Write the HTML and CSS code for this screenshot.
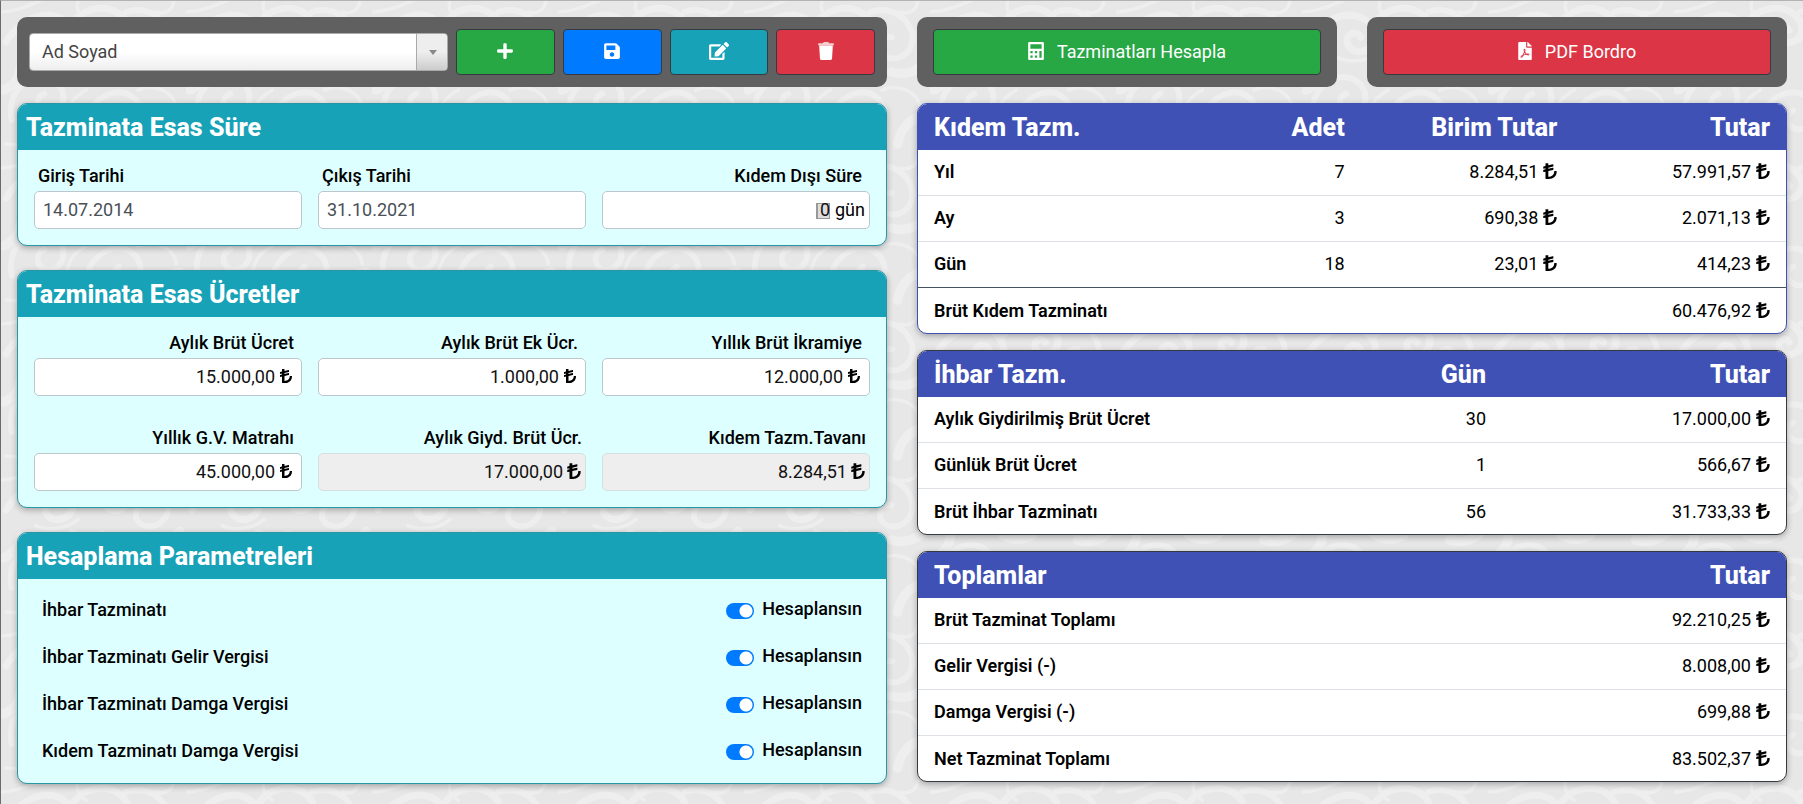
FILE: index.html
```html
<!DOCTYPE html>
<html lang="tr">
<head>
<meta charset="utf-8">
<meta name="viewport" content="width=device-width, initial-scale=1">
<title>Tazminat Hesaplama</title>
<link rel="stylesheet" href="styles.css">
</head>
<body>
<svg class="sprite" aria-hidden="true">
  <symbol id="lira" viewBox="0 0 384 512"><path d="M371.994 256h-48.019C317.64 256 312 260.912 312 267.246 312 368 230.179 416 144 416V256.781l134.603-29.912A12 12 0 0 0 288 215.155v-40.976c0-7.677-7.109-13.38-14.603-11.714L144 191.219V160.78l134.603-29.912A12 12 0 0 0 288 119.154V78.179c0-7.677-7.109-13.38-14.603-11.714L144 95.219V44c0-6.627-5.373-12-12-12H76c-6.627 0-12 5.373-12 12v68.997L9.397 125.131A12 12 0 0 0 0 136.845v40.976c0 7.677 7.109 13.38 14.603 11.714L64 178.558v30.439L9.397 221.131A12 12 0 0 0 0 232.845v40.976c0 7.677 7.109 13.38 14.603 11.714L64 274.558V468c0 6.627 5.373 12 12 12h79.583c134.091 0 223.255-77.834 228.408-211.592.261-6.782-5.211-12.408-11.997-12.408z"/></symbol>
</svg>
<svg class="backdrop" aria-hidden="true">
  <defs>
    <pattern id="damask" width="310" height="260" patternUnits="userSpaceOnUse" patternTransform="scale(.6)">
      <g fill="none" stroke="#f8f8f8" stroke-linecap="round">
        <path stroke-width="12" d="M10 70c30-50 90-60 110-20 12 30-30 50-44 24-6-16 14-26 22-12M120 40c30-40 80-30 92 0 8 26-22 42-36 22-6-14 10-22 16-12"/>
        <path stroke-width="10" d="M210 20c30-10 60 4 70 34 6 30-20 52-44 40-18-12-8-36 10-32M20 200c-10-40 20-80 60-70 34 10 34 56 2 60-22 0-26-28-8-34M150 250c-20-40 0-90 44-96 40-2 54 44 24 60-24 8-38-18-20-30"/>
        <path stroke-width="16" d="M6 150c16-6 26-20 28-36M120 110c14 10 34 12 50 2M246 120c20 6 40 0 54-14M256 240c6-30 24-44 44-46M96 240c10-10 26-14 38-8"/>
        <path stroke-width="6" d="M0 20c30 0 60-16 70-20M130 0c-4 14 0 24 14 34M290 0c-2 20-18 24-30 20M60 96c20 10 50 6 70-10M230 150c30-12 60 4 64 30M110 200c4-30 16-40 34-50M10 240c20 0 50 6 70 20"/>
      </g>
    </pattern>
  </defs>
  <rect width="100%" height="100%" fill="url(#damask)"/>
</svg>

<main class="page">
  <section class="column">
    <div class="toolbar toolbar-person">
      <div class="picker">
        <select class="picker-select" aria-label="Ad Soyad"><option>Ad Soyad</option></select>
      </div>
      <button class="btn btn-green" type="button" aria-label="Ekle"><svg class="icon icon-448" viewBox="0 0 448 512"><path d="M416 208H272V64c0-17.670-14.330-32-32-32h-32c-17.670 0-32 14.330-32 32v144H32c-17.670 0-32 14.330-32 32v32c0 17.670 14.330 32 32 32h144v144c0 17.670 14.330 32 32 32h32c17.670 0 32-14.330 32-32V304h144c17.670 0 32-14.330 32-32v-32c0-17.670-14.330-32-32-32z"/></svg></button>
      <button class="btn btn-blue" type="button" aria-label="Kaydet"><svg class="icon icon-448" viewBox="0 0 448 512"><path d="M433.941 129.941l-83.882-83.882A48 48 0 0 0 316.118 32H48C21.490 32 0 53.490 0 80v352c0 26.510 21.490 48 48 48h352c26.510 0 48-21.490 48-48V163.882a48 48 0 0 0-14.059-33.941zM224 416c-35.346 0-64-28.654-64-64 0-35.346 28.654-64 64-64s64 28.654 64 64c0 35.346-28.654 64-64 64zm96-304.520V212c0 6.627-5.373 12-12 12H76c-6.627 0-12-5.373-12-12V108c0-6.627 5.373-12 12-12h228.520c3.183 0 6.235 1.264 8.485 3.515l3.480 3.480A11.996 11.996 0 0 1 320 111.480z"/></svg></button>
      <button class="btn btn-teal" type="button" aria-label="Düzenle"><svg class="icon icon-576" viewBox="0 0 576 512"><path d="M402.600 83.200l90.200 90.200c3.800 3.800 3.800 10 0 13.800L274.400 405.600l-92.800 10.300c-12.400 1.400-22.900-9.100-21.500-21.500l10.300-92.800L388.800 83.200c3.800-3.800 10-3.800 13.800 0zm162-22.900l-48.800-48.800c-15.200-15.200-39.900-15.200-55.200 0l-35.400 35.400c-3.800 3.800-3.800 10 0 13.800l90.200 90.200c3.800 3.800 10 3.800 13.800 0l35.400-35.400c15.200-15.300 15.200-40 0-55.200zM384 346.200V448H64V128h229.800c3.200 0 6.200-1.300 8.500-3.500l40-40c7.600-7.600 2.200-20.500-8.500-20.500H48C21.500 64 0 85.500 0 112v352c0 26.500 21.500 48 48 48h352c26.500 0 48-21.500 48-48V306.200c0-10.700-12.900-16-20.500-8.500l-40 40c-2.200 2.300-3.500 5.300-3.500 8.500z"/></svg></button>
      <button class="btn btn-red" type="button" aria-label="Sil"><svg class="icon icon-448" viewBox="0 0 448 512"><path opacity=".75" d="M432 32H312l-9.400-18.700A24 24 0 0 0 281.100 0H166.800a23.720 23.720 0 0 0-21.400 13.300L136 32H16A16 16 0 0 0 0 48v32a16 16 0 0 0 16 16h416a16 16 0 0 0 16-16V48a16 16 0 0 0-16-16z"/><path d="M32 96h384v32L394.800 467a48 48 0 0 1-47.900 45H101.100a48 48 0 0 1-47.900-45L32 128z"/></svg></button>
    </div>

    <section class="card">
      <h2 class="card-title">Tazminata Esas Süre</h2>
      <div class="fields">
        <div class="field field-date">
          <label class="field-label" for="giris">Giriş Tarihi</label>
          <div class="box"><input class="box-input" id="giris" type="text" value="14.07.2014"></div>
        </div>
        <div class="field field-date">
          <label class="field-label" for="cikis">Çıkış Tarihi</label>
          <div class="box"><input class="box-input" id="cikis" type="text" value="31.10.2021"></div>
        </div>
        <div class="field">
          <label class="field-label" for="disi">Kıdem Dışı Süre</label>
          <div class="box box-days"><input class="box-input" id="disi" type="text" value="0"><span class="unit">gün</span></div>
        </div>
      </div>
    </section>

    <section class="card">
      <h2 class="card-title">Tazminata Esas Ücretler</h2>
      <div class="fields">
        <div class="field">
          <label class="field-label" for="ucret">Aylık Brüt Ücret</label>
          <div class="box"><input class="box-input" id="ucret" type="text" value="15.000,00"><svg class="lira-small"><use href="#lira"/></svg></div>
        </div>
        <div class="field">
          <label class="field-label" for="ek">Aylık Brüt Ek Ücr.</label>
          <div class="box"><input class="box-input" id="ek" type="text" value="1.000,00"><svg class="lira-small"><use href="#lira"/></svg></div>
        </div>
        <div class="field">
          <label class="field-label" for="ikramiye">Yıllık Brüt İkramiye</label>
          <div class="box"><input class="box-input" id="ikramiye" type="text" value="12.000,00"><svg class="lira-small"><use href="#lira"/></svg></div>
        </div>
        <div class="field">
          <label class="field-label" for="matrah">Yıllık G.V. Matrahı</label>
          <div class="box"><input class="box-input" id="matrah" type="text" value="45.000,00"><svg class="lira-small"><use href="#lira"/></svg></div>
        </div>
        <div class="field field-readonly">
          <label class="field-label" for="giydirilmis">Aylık Giyd. Brüt Ücr.</label>
          <div class="box"><input class="box-input" id="giydirilmis" type="text" value="17.000,00" readonly><svg class="lira"><use href="#lira"/></svg></div>
        </div>
        <div class="field field-readonly">
          <label class="field-label" for="tavan">Kıdem Tazm.Tavanı</label>
          <div class="box"><input class="box-input" id="tavan" type="text" value="8.284,51" readonly><svg class="lira"><use href="#lira"/></svg></div>
        </div>
      </div>
    </section>

    <section class="card">
      <h2 class="card-title">Hesaplama Parametreleri</h2>
      <div class="params">
        <div class="param"><span>İhbar Tazminatı</span><label class="toggle"><input class="switch" type="checkbox" checked>Hesaplansın</label></div>
        <div class="param"><span>İhbar Tazminatı Gelir Vergisi</span><label class="toggle"><input class="switch" type="checkbox" checked>Hesaplansın</label></div>
        <div class="param"><span>İhbar Tazminatı Damga Vergisi</span><label class="toggle"><input class="switch" type="checkbox" checked>Hesaplansın</label></div>
        <div class="param"><span>Kıdem Tazminatı Damga Vergisi</span><label class="toggle"><input class="switch" type="checkbox" checked>Hesaplansın</label></div>
      </div>
    </section>
  </section>

  <section class="column column-results">
    <div class="actions">
      <div class="toolbar">
        <button class="btn btn-green" type="button"><svg class="icon icon-448" viewBox="0 0 448 512"><path fill-rule="evenodd" d="M32 0h384a32 32 0 0 1 32 32v448a32 32 0 0 1-32 32H32a32 32 0 0 1-32-32V32A32 32 0 0 1 32 0zM64 64v128h320V64zM64 256v64h64v-64zM192 256v64h64v-64zM64 384v64h64v-64zM192 384v64h64v-64zM320 256v192h64V256z"/></svg>Tazminatları Hesapla</button>
      </div>
      <div class="toolbar">
        <button class="btn btn-red" type="button"><svg class="icon icon-384" viewBox="0 0 384 512"><path d="M181.900 256.100c-5-16-4.900-46.900-2-46.900 8.400 0 7.600 36.900 2 46.900zm-1.700 47.200c-7.700 20.200-17.300 43.300-28.400 62.700 18.300-7 39-17.200 62.900-21.900-12.700-9.600-24.900-23.400-34.500-40.800zM86.100 428.100c0 .8 13.200-5.400 34.900-40.200-6.700 6.300-29.100 24.500-34.900 40.200zM248 160h136v328c0 13.300-10.700 24-24 24H24c-13.300 0-24-10.700-24-24V24C0 10.700 10.700 0 24 0h200v136c0 13.200 10.800 24 24 24zm-8 171.800c-20-12.200-33.300-29-42.700-53.800 4.500-18.500 11.600-46.600 6.200-64.200-4.700-29.400-42.400-26.500-47.800-6.800-5 18.300-.4 44.100 8.100 77-11.600 27.600-28.700 64.600-40.800 85.800-.1 0-.1.1-.2.1-27.100 13.900-73.600 44.500-54.500 68 5.600 6.900 16 10 21.500 10 17.900 0 35.700-18 61.100-61.800 25.800-8.500 54.100-19.100 79-23.200 21.700 11.800 47.100 19.500 64 19.500 29.200 0 31.200-32 19.700-43.400-13.900-13.600-54.300-9.700-73.600-7.200zM377 105L279 7c-4.500-4.500-10.600-7-17-7h-6v128h128v-6.100c0-6.300-2.500-12.400-7-16.900zm-74.100 255.300c4.100-2.700-2.500-11.900-42.800-9 37.100 15.800 42.800 9 42.800 9z"/></svg>PDF Bordro</button>
      </div>
    </div>

    <div class="result result-blue">
      <table class="table">
        <colgroup><col><col class="col-quarter"><col class="col-quarter"><col class="col-quarter"></colgroup>
        <thead><tr><th>Kıdem Tazm.</th><th>Adet</th><th>Birim Tutar</th><th>Tutar</th></tr></thead>
        <tbody>
          <tr><th>Yıl</th><td>7</td><td>8.284,51<svg class="lira"><use href="#lira"/></svg></td><td>57.991,57<svg class="lira"><use href="#lira"/></svg></td></tr>
          <tr><th>Ay</th><td>3</td><td>690,38<svg class="lira"><use href="#lira"/></svg></td><td>2.071,13<svg class="lira"><use href="#lira"/></svg></td></tr>
          <tr><th>Gün</th><td>18</td><td>23,01<svg class="lira"><use href="#lira"/></svg></td><td>414,23<svg class="lira"><use href="#lira"/></svg></td></tr>
          <tr class="row-total"><th>Brüt Kıdem Tazminatı</th><td></td><td></td><td>60.476,92<svg class="lira"><use href="#lira"/></svg></td></tr>
        </tbody>
      </table>
    </div>

    <div class="result">
      <table class="table">
        <colgroup><col><col class="col-quarter"><col class="col-third"></colgroup>
        <thead><tr><th>İhbar Tazm.</th><th>Gün</th><th>Tutar</th></tr></thead>
        <tbody>
          <tr><th>Aylık Giydirilmiş Brüt Ücret</th><td>30</td><td>17.000,00<svg class="lira"><use href="#lira"/></svg></td></tr>
          <tr><th>Günlük Brüt Ücret</th><td>1</td><td>566,67<svg class="lira"><use href="#lira"/></svg></td></tr>
          <tr><th>Brüt İhbar Tazminatı</th><td>56</td><td>31.733,33<svg class="lira"><use href="#lira"/></svg></td></tr>
        </tbody>
      </table>
    </div>

    <div class="result">
      <table class="table">
        <colgroup><col><col class="col-third"></colgroup>
        <thead><tr><th>Toplamlar</th><th>Tutar</th></tr></thead>
        <tbody>
          <tr><th>Brüt Tazminat Toplamı</th><td>92.210,25<svg class="lira"><use href="#lira"/></svg></td></tr>
          <tr><th>Gelir Vergisi (-)</th><td>8.008,00<svg class="lira"><use href="#lira"/></svg></td></tr>
          <tr><th>Damga Vergisi (-)</th><td>699,88<svg class="lira"><use href="#lira"/></svg></td></tr>
          <tr><th>Net Tazminat Toplamı</th><td>83.502,37<svg class="lira"><use href="#lira"/></svg></td></tr>
        </tbody>
      </table>
    </div>
  </section>
</main>
</body>
</html>
```

FILE: styles.css
```css
* {
  box-sizing: border-box;
}

body {
  margin: 0;
  min-height: 100vh;
  position: relative;
  background: #e7e7e7;
  color: #000;
  font-family: Roboto, "Liberation Sans", sans-serif;
  font-size: 18px;
  line-height: 27px;
}

button,
input,
select {
  font: inherit;
}

.sprite {
  display: none;
}

.backdrop {
  position: absolute;
  inset: 0;
  width: 100%;
  height: 100%;
  z-index: -1;
  opacity: 0.45;
}

.page {
  display: grid;
  grid-template-columns: 1fr 1fr;
  gap: 30px;
  min-height: 100vh;
  padding: 16px;
  border-top: 1px solid #b5b2b3;
  border-left: 1px solid #6b6b6f;
}

.column {
  display: flex;
  flex-direction: column;
  gap: 24px;
  min-width: 0;
}

.column-results {
  gap: 16px;
}

/* Toolbars */

.toolbar {
  display: flex;
  align-items: center;
  padding: 12px 16px;
  border-radius: 10px;
  background: #606060;
}

.toolbar-person {
  display: grid;
  grid-template-columns: 419px repeat(4, 1fr);
  gap: 8px;
  margin-bottom: -8px;
  padding: 12px;
}

.actions {
  display: grid;
  grid-template-columns: 1fr 1fr;
  gap: 30px;
}

.picker {
  position: relative;
  display: flex;
}

.picker::before {
  content: "";
  position: absolute;
  top: 1px;
  right: 1px;
  bottom: 1px;
  width: 30px;
  border-left: 1px solid #aaa;
  border-radius: 0 4px 4px 0;
  background: linear-gradient(#eee 50%, #ccc);
  pointer-events: none;
}

.picker::after {
  content: "";
  position: absolute;
  top: 17px;
  right: 11px;
  border: 4px solid transparent;
  border-top: 5px solid #888;
  border-bottom: 0;
  pointer-events: none;
}

.picker-select {
  width: 100%;
  height: 38px;
  padding: 0 40px 2px 12px;
  border: 1px solid #aaa;
  border-radius: 4px;
  appearance: none;
  background: linear-gradient(#fff 50%, #eee);
  color: #444;
}

.btn {
  display: flex;
  flex: 1;
  align-items: center;
  justify-content: center;
  gap: 13px;
  height: 46px;
  padding: 0 0 2px;
  border: 1px solid #343a40;
  border-radius: 4px;
  color: #fff;
}

.btn-green {
  background: #28a745;
}

.btn-blue {
  background: #007bff;
}

.btn-teal {
  background: #17a2b8;
}

.btn-red {
  background: #dc3545;
}

.icon {
  height: 18px;
  fill: currentColor;
}

.icon-384 {
  width: 14px;
}

.icon-448 {
  width: 16px;
}

.icon-576 {
  width: 20px;
}

/* Input cards */

.card {
  overflow: hidden;
  border: 1px solid #2a95a5;
  border-radius: 10px;
  background: #dff;
  box-shadow: 0 2px 6px rgba(0, 0, 0, 0.3);
}

.card-title {
  margin: 0;
  padding: 1px 8px 0;
  background: #17a2b8;
  color: #fff;
  font-size: 25px;
  font-weight: 800;
  line-height: 45px;
}

.fields {
  display: grid;
  grid-template-columns: repeat(3, 1fr);
  gap: 28px 16px;
  padding: 12px 16px 16px;
}

.field {
  display: flex;
  flex-direction: column;
  gap: 2px;
  min-width: 0;
}

.field-label {
  padding: 0 8px;
  font-weight: 500;
  text-align: right;
}

.field-date .field-label {
  padding: 0 4px;
  text-align: left;
}

.field-readonly .field-label {
  padding: 0 4px;
}

.box {
  display: flex;
  align-items: center;
  gap: 5px;
  height: 38px;
  padding: 0 9px 2px 8px;
  border: 1px solid #bcc6cb;
  border-radius: 5px;
  background: #fff;
}

.box-input {
  flex: 1;
  width: 100%;
  min-width: 0;
  padding: 0;
  border: 0;
  outline: 0;
  background: none;
  color: #111;
  text-align: right;
}

.field-date .box-input {
  color: #495057;
  text-align: left;
}

.field-readonly .box {
  gap: 4px;
  padding-right: 4px;
  border-color: #d5dfdf;
  background: #eee;
}

.box-days {
  position: relative;
  padding-right: 4px;
}

.box-days::before {
  content: "";
  position: absolute;
  top: 11px;
  right: 39px;
  width: 11px;
  height: 14px;
  border: 1px solid #999;
  border-left-width: 2px;
  background: #ddd;
}

.box-days .box-input {
  position: relative;
}

.lira {
  width: 14px;
  height: 18px;
}

.lira-small {
  width: 12px;
  height: 16px;
}

/* Calculation switches */

.params {
  padding: 7px 24px 9px;
  font-weight: 500;
}

.param {
  display: flex;
  align-items: center;
  justify-content: space-between;
  height: 47px;
}

.toggle {
  display: flex;
  align-items: center;
  gap: 8px;
  padding-bottom: 2px;
}

.switch {
  width: 28px;
  height: 16px;
  margin: 5px 0 0;
  border-radius: 8px;
  appearance: none;
  background: radial-gradient(circle at 20px 8px, #fff 6px, #007bff 7px);
}

/* Result tables */

.result {
  overflow: hidden;
  border: 1px solid #343a40;
  border-radius: 10px;
  background: #fff;
  box-shadow: 0 2px 6px rgba(0, 0, 0, 0.3);
}

.result-blue {
  border-color: #3f51b5;
}

.table {
  width: 100%;
  table-layout: fixed;
  border-collapse: separate;
  border-spacing: 0;
}

.col-quarter {
  width: 24.5%;
}

.col-third {
  width: 284px;
}

.table th,
.table td {
  height: 46px;
  padding: 0 16px 2px;
  border-bottom: 1px solid #dee2e6;
  text-align: right;
  white-space: nowrap;
}

.table th:first-child {
  text-align: left;
}

.table thead th {
  padding-bottom: 0;
  border: 0;
  background: #3f51b5;
  color: #fff;
  font-size: 25px;
  font-weight: 800;
}

.table tbody th {
  font-weight: 600;
}

.table tbody tr:last-child th,
.table tbody tr:last-child td {
  height: 45px;
  padding-bottom: 1px;
  border-bottom: 0;
}

.table tbody .row-total th,
.table tbody .row-total td {
  box-shadow: 0 -1px 0 #45525f;
}

.table .lira {
  margin-left: 5px;
  vertical-align: -2px;
}
```
